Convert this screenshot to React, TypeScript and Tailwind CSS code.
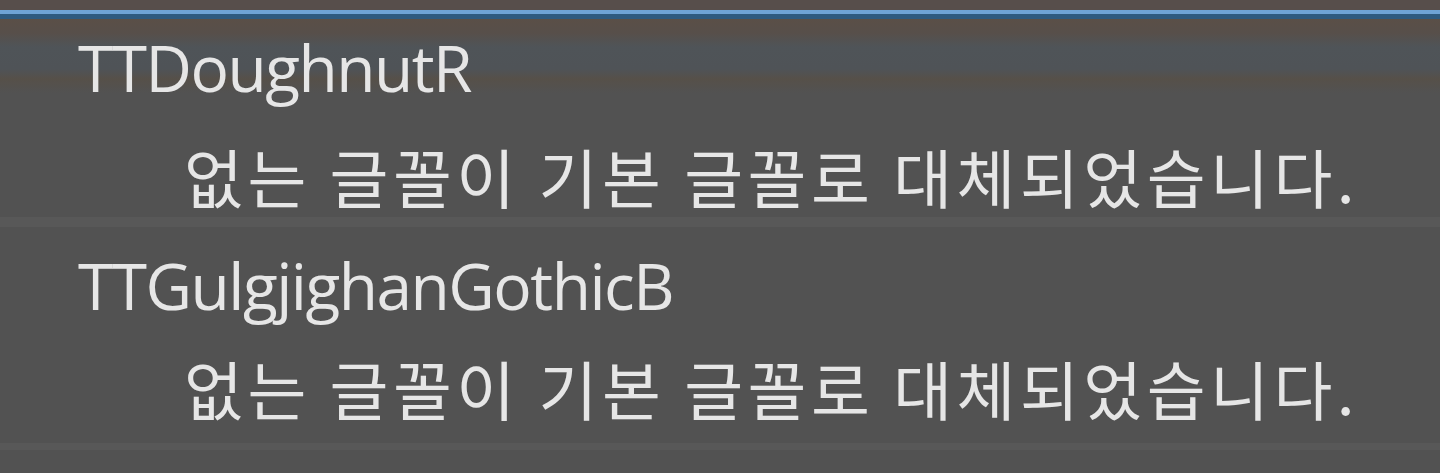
import React from 'react';

const App: React.FC = () => {
  return (
    <div className="h-[473px] w-[1440px] overflow-hidden bg-[#525252] font-['Open_Sans','Noto_Sans_CJK_KR',sans-serif] text-[#e6e6e6]">
      <div className="h-[10px] bg-[#574e4b]" />
      <div className="h-[4px] bg-[#6fa3d6]" />
      <div className="h-[5px] bg-[#2f5a80]" />

      <div className="bg-[linear-gradient(180deg,#5a4f47_0px,#574f4a_14px,#4f5458_28px,#4f5357_50px,#565049_60px,#525252_74px)]">
        {/* row 1 */}
        <div className="flex h-[208px] flex-col">
          <div className="pl-[78px] pt-[12px] text-[64px] leading-[74px] tracking-[-1.5px]">TTDoughnutR</div>
          <div className="pl-[184px] pt-[33px] font-['Noto_Sans_CJK_KR',sans-serif] text-[64px] leading-[74px] tracking-[4.5px]">
            없는 글꼴이 기본 글꼴로 대체되었습니다.
          </div>
          <div className="mt-auto h-[10px] bg-[#585858]" />
        </div>

        {/* row 2 */}
        <div className="flex h-[223px] flex-col">
          <div className="pl-[78px] pt-[22px] text-[64px] leading-[74px] tracking-[-1.5px]">TTGulgjighanGothicB</div>
          <div className="pl-[184px] pt-[27px] font-['Noto_Sans_CJK_KR',sans-serif] text-[64px] leading-[74px] tracking-[4.5px]">
            없는 글꼴이 기본 글꼴로 대체되었습니다.
          </div>
          <div className="mt-auto h-[7px] bg-[#585858]" />
        </div>
      </div>
    </div>
  );
};

export default App;
